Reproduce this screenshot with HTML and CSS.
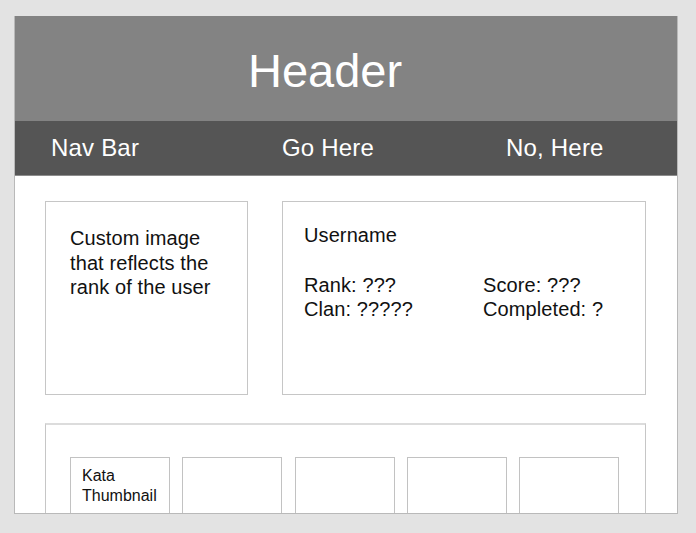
FILE: index.html
```html
<!DOCTYPE html>
<html>
<head>
<meta charset="utf-8">
<link rel="stylesheet" href="styles.css">
</head>
<body>
<div class="frame">
  <header class="header">Header</header>
  <nav class="nav">
    <span class="nav-item">Nav Bar</span>
    <span class="nav-item">Go Here</span>
    <span class="nav-item">No, Here</span>
  </nav>
  <main class="content">
    <div class="top-row">
      <div class="card image-card">Custom image that reflects the rank of the user</div>
      <div class="card info-card">
        <div class="username">Username</div>
        <div class="stats">
          <span>Rank: ???</span>
          <span>Score: ???</span>
          <span>Clan: ?????</span>
          <span>Completed: ?</span>
        </div>
      </div>
    </div>
    <div class="card kata-card">
      <div class="thumb">Kata Thumbnail</div>
      <div class="thumb"></div>
      <div class="thumb"></div>
      <div class="thumb"></div>
      <div class="thumb"></div>
    </div>
  </main>
</div>
</body>
</html>
```
FILE: styles.css
```css
html, body {
  margin: 0;
  padding: 0;
}
body {
  background: #e3e3e3;
  font-family: "Liberation Sans", Arial, sans-serif;
  width: 696px;
  height: 533px;
  overflow: hidden;
}
.frame {
  box-sizing: border-box;
  margin: 16px 0 0 14px;
  width: 664px;
  height: 498px;
  background: #fff;
  border: 1px solid #b9b9b9;
  border-top: none;
  overflow: hidden;
}
.header {
  box-sizing: border-box;
  height: 105px;
  margin: 0 -1px;
  background: #838383;
  color: #fff;
  font-size: 47px;
  line-height: 55px;
  padding: 27px 0 0 234px;
}
.nav {
  box-sizing: border-box;
  height: 55px;
  margin: 0 -1px;
  background: #555555;
  border-bottom: 1px solid #8c8c8c;
  color: #fff;
  font-size: 24px;
  letter-spacing: 0.2px;
  display: grid;
  grid-template-columns: 231px 224px 1fr;
  align-items: center;
  padding-left: 37px;
}
.content {
  padding: 25px 31px 0 30px;
}
.top-row {
  display: flex;
  gap: 34px;
}
.card {
  box-sizing: border-box;
  border: 1px solid #c6c6c6;
  background: #fff;
  color: #111;
}
.image-card {
  width: 203px;
  height: 194px;
  font-size: 20px;
  line-height: 24.5px;
  letter-spacing: 0.1px;
  padding: 24px 18px 0 24px;
}
.info-card {
  flex: 1;
  height: 194px;
  font-size: 20px;
  line-height: 24px;
  letter-spacing: 0.1px;
  padding: 21px 20px 0 21px;
}
.username {
  margin-bottom: 26px;
}
.stats {
  display: grid;
  grid-template-columns: 179px auto;
}
.kata-card {
  margin-top: 28px;
  height: 200px;
  border-top: 2px solid #dcdcdc;
  display: flex;
  gap: 12.25px;
  padding: 32px 0 0 24px;
}
.thumb {
  box-sizing: border-box;
  width: 100px;
  height: 100px;
  border: 1px solid #c2c2c2;
  font-size: 16px;
  line-height: 20px;
  padding: 8px 8px 0 11px;
  color: #111;
}
```
